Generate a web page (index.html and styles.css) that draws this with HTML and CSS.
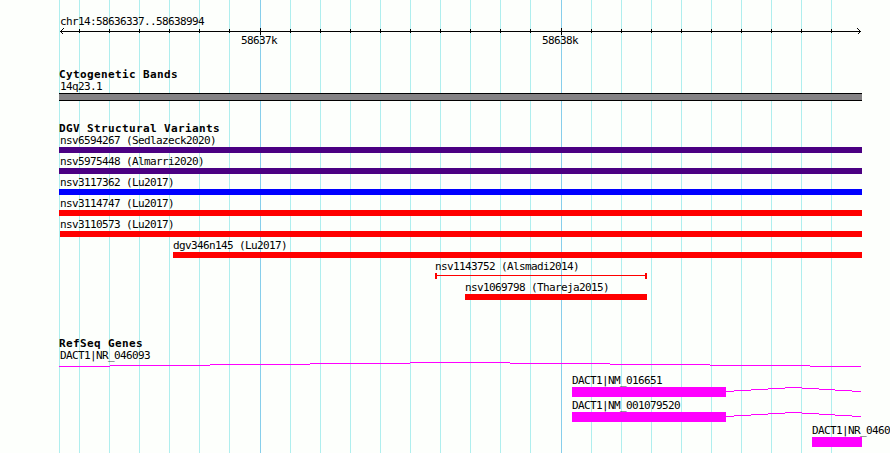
FILE: index.html
```
<!DOCTYPE html>
<html lang="en">

<head>
    <meta charset="UTF-8">
    <meta name="viewport" content="width=device-width, initial-scale=1.0">
    <title>chr14:58636337..58638994</title>
    <link rel="stylesheet" href="styles.css">
</head>

<body>
    <div class="browser">
        <svg class="gridlines" width="890" height="453" shape-rendering="crispEdges">
            <path class="minor" d="M59.5 0v453M79.5 0v453M109.5 0v453M139.5 0v453M169.5 0v453M199.5 0v453M229.5 0v453M290.5 0v453M320.5 0v453M350.5 0v453M380.5 0v453M410.5 0v453M440.5 0v453M470.5 0v453M500.5 0v453M530.5 0v453M591.5 0v453M621.5 0v453M651.5 0v453M681.5 0v453M711.5 0v453M741.5 0v453M771.5 0v453M801.5 0v453M831.5 0v453" />
            <path class="major" d="M260.5 0v453M561.5 0v453" />
        </svg>

        <header class="ruler">
            <div class="label">chr14:58636337..58638994</div>
            <svg class="axis" width="803" height="7" shape-rendering="crispEdges">
                <path d="M1 3.5h801" />
                <path d="M20.5 1v4M50.5 1v4M80.5 1v4M110.5 1v4M140.5 1v4M170.5 1v4M231.5 1v4M261.5 1v4M291.5 1v4M321.5 1v4M351.5 1v4M381.5 1v4M411.5 1v4M441.5 1v4M471.5 1v4M532.5 1v4M562.5 1v4M592.5 1v4M622.5 1v4M652.5 1v4M682.5 1v4M712.5 1v4M742.5 1v4M772.5 1v4" />
                <path d="M201.5 0v7M502.5 0v7" />
                <path d="M4.5 .5l-3 3l3 3M798.5 .5l3 3l-3 3" />
            </svg>
            <div class="ticks">
                <span class="label">58637k</span>
                <span class="label">58638k</span>
            </div>
        </header>

        <section class="track cytoband">
            <h2>Cytogenetic Bands</h2>
            <div class="label">14q23.1</div>
            <div class="band"></div>
        </section>

        <section class="track variants">
            <h2>DGV Structural Variants</h2>
            <div class="feature" style="margin-left: 0px; width: 803px">
                <div class="label">nsv6594267 (Sedlazeck2020)</div>
                <div class="bar complex"></div>
            </div>
            <div class="feature" style="margin-left: 0px; width: 803px">
                <div class="label">nsv5975448 (Almarri2020)</div>
                <div class="bar complex"></div>
            </div>
            <div class="feature" style="margin-left: 0px; width: 803px">
                <div class="label">nsv3117362 (Lu2017)</div>
                <div class="bar gain"></div>
            </div>
            <div class="feature" style="margin-left: 0px; width: 803px">
                <div class="label">nsv3114747 (Lu2017)</div>
                <div class="bar loss"></div>
            </div>
            <div class="feature inset" style="margin-left: 1px; width: 802px">
                <div class="label">nsv3110573 (Lu2017)</div>
                <div class="bar loss"></div>
            </div>
            <div class="feature inset" style="margin-left: 114px; width: 689px">
                <div class="label">dgv346n145 (Lu2017)</div>
                <div class="bar loss"></div>
            </div>
            <div class="feature inset" style="margin-left: 376px; width: 212px">
                <div class="label">nsv1143752 (Alsmadi2014)</div>
                <div class="bar range"></div>
            </div>
            <div class="feature inset" style="margin-left: 406px; width: 182px">
                <div class="label">nsv1069798 (Thareja2015)</div>
                <div class="bar loss"></div>
            </div>
        </section>

        <section class="track genes">
            <h2>RefSeq Genes</h2>
            <div class="feature" style="margin-left: 0px; width: 803px">
                <div class="label">DACT1|NR_046093</div>
                <div class="gene">
                    <svg class="intron" width="803" height="10" shape-rendering="crispEdges">
                        <path d="M0 4.5h51M51 3.5h100M151 2.5h100M251 1.5h100M351 .5h100M451 1.5h100M551 2.5h100M651 3.5h100M751 4.5h51" />
                    </svg>
                </div>
            </div>
            <div class="feature inset" style="margin-left: 513px; width: 290px">
                <div class="label">DACT1|NM_016651</div>
                <div class="gene">
                    <div class="exon" style="width: 154px"></div>
                    <svg class="intron" width="136" height="10" shape-rendering="crispEdges">
                        <path d="M0 4.5h8M8 3.5h17M25 2.5h17M42 1.5h17M59 .5h17M76 1.5h17M93 2.5h16M109 3.5h17M126 4.5h9" />
                    </svg>
                </div>
            </div>
            <div class="feature inset" style="margin-left: 513px; width: 290px">
                <div class="label">DACT1|NM_001079520</div>
                <div class="gene">
                    <div class="exon" style="width: 154px"></div>
                    <svg class="intron" width="136" height="10" shape-rendering="crispEdges">
                        <path d="M0 4.5h8M8 3.5h17M25 2.5h17M42 1.5h17M59 .5h17M76 1.5h17M93 2.5h16M109 3.5h17M126 4.5h9" />
                    </svg>
                </div>
            </div>
            <div class="feature inset" style="margin-left: 753px; width: 50px">
                <div class="label">DACT1|NR_0460</div>
                <div class="gene">
                    <div class="exon" style="width: 50px"></div>
                </div>
            </div>
        </section>
    </div>
</body>

</html>
```
FILE: styles.css
```
body {
    margin: 0;
    background-color: #fdfffc;
    color: #000;
    overflow: hidden;
}

.browser {
    position: relative;
    box-sizing: border-box;
    width: 890px;
    height: 453px;
    padding: 15px 0 0 59px;
    overflow: hidden;
}

/* vertical guides behind all tracks */
.gridlines {
    position: absolute;
    top: 0;
    left: 0;
    z-index: -1;
}

.gridlines path {
    fill: none;
    stroke: #afeeee;
}

.gridlines .major {
    stroke: #87ceeb;
}

.label {
    height: 12px;
    padding-left: 1px;
    font: 11px/13px "DejaVu Sans Mono", monospace;
    letter-spacing: -0.622px;
    white-space: nowrap;
}

h2 {
    height: 12px;
    margin: 0;
    font: bold 11px/13px "DejaVu Sans Mono", monospace;
    letter-spacing: 0.378px;
    white-space: nowrap;
}

.ruler {
    height: 53px;
}

.axis {
    display: block;
    margin-top: 1px;
}

.axis path {
    fill: none;
    stroke: #000;
}

.ticks {
    display: flex;
    gap: 264px;
    margin-top: -1px;
    padding-left: 181px;
}

.track {
    width: 803px;
}

.cytoband {
    height: 54px;
}

.band {
    box-sizing: border-box;
    height: 8px;
    margin-top: 1px;
    border: solid #000;
    border-width: 1px 0;
    background-color: #848284;
}

.variants {
    height: 215px;
}

.variants .feature {
    height: 21px;
}

.inset .label {
    padding-left: 0;
}

.bar {
    height: 6px;
    margin-top: 1px;
}

.complex {
    background-color: #4b0082;
}

.gain {
    background-color: #00f;
}

.loss {
    background-color: #f00;
}

.range {
    box-sizing: border-box;
    border: solid #f00;
    border-width: 0 2px;
    background: linear-gradient(#f00, #f00) 0 2px / 100% 1px no-repeat;
}

.genes .feature {
    height: 25px;
}

.gene {
    display: flex;
    margin-top: 1px;
}

.exon {
    height: 10px;
    background-color: #f0f;
}

.intron {
    display: block;
}

.intron path {
    fill: none;
    stroke: #f0f;
}
```
